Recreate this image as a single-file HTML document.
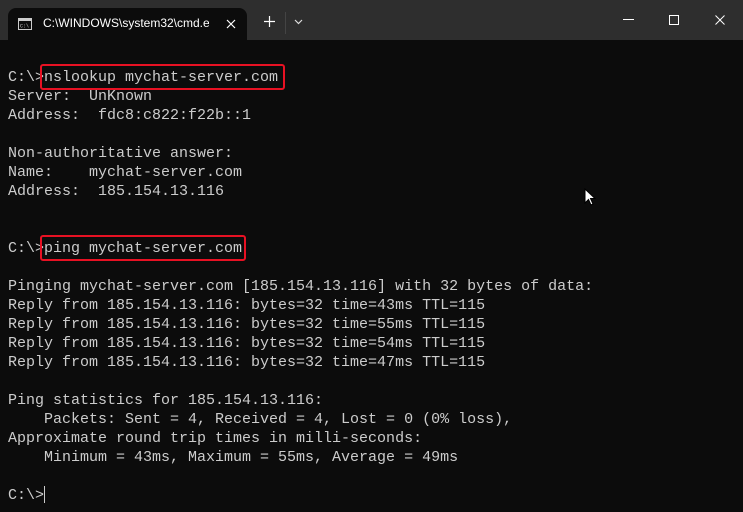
<!DOCTYPE html>
<html><head><style>
body{margin:0;width:743px;height:512px;background:#0c0c0c;overflow:hidden;position:relative;font-family:"Liberation Sans",sans-serif}
.tb{position:absolute;left:0;top:0;width:743px;height:40px;background:#2e2e2e}
.tab{position:absolute;left:8px;top:8px;width:239px;height:32px;background:#0c0c0c;border-radius:8px 8px 0 0}
.tab .t{position:absolute;left:35px;top:8px;color:#fff;font-size:12px;width:166px;overflow:hidden;white-space:nowrap}
pre{position:absolute;left:8px;top:68px;margin:0;font-family:"Liberation Mono",monospace;font-size:15px;line-height:19px;color:#cccccc}
.box{position:absolute;border:2px solid #e81123;border-radius:3px;box-sizing:border-box}
</style></head><body>
<div class="tb">
<div class="tab">
<svg style="position:absolute;left:10px;top:10px" width="14" height="12"><rect x="0.5" y="0.5" width="13" height="11" fill="none" stroke="#ccc"/><rect x="1" y="1" width="12" height="2" fill="#ccc"/><text x="2" y="9.5" font-size="5" fill="#ccc" font-family="Liberation Mono">C:\</text></svg>
<div class="t">C:\WINDOWS\system32\cmd.exe</div>
<svg style="position:absolute;left:218px;top:11px" width="10" height="10"><path d="M1 1L9 9M9 1L1 9" stroke="#fff" stroke-width="1.2"/></svg>
</div>
<svg style="position:absolute;left:264px;top:16px" width="11" height="11"><path d="M5.5 0V11M0 5.5H11" stroke="#fff" stroke-width="1.2"/></svg>
<svg style="position:absolute;left:294px;top:19px" width="9" height="6"><path d="M1 1L4.5 4.5L8 1" stroke="#ddd" fill="none" stroke-width="1.2"/></svg>
<div style="position:absolute;left:285px;top:12px;width:1px;height:22px;background:#444"></div>
<div style="position:absolute;left:623px;top:19px;width:11px;height:1px;background:#fff"></div>
<div style="position:absolute;left:669px;top:15px;width:8px;height:8px;border:1px solid #fff"></div>
<svg style="position:absolute;left:715px;top:15px" width="10" height="10"><path d="M0.5 0.5L9.5 9.5M9.5 0.5L0.5 9.5" stroke="#fff" stroke-width="1"/></svg>
</div>
<pre>C:\&gt;nslookup mychat-server.com
Server:  UnKnown
Address:  fdc8:c822:f22b::1

Non-authoritative answer:
Name:    mychat-server.com
Address:  185.154.13.116


C:\&gt;ping mychat-server.com

Pinging mychat-server.com [185.154.13.116] with 32 bytes of data:
Reply from 185.154.13.116: bytes=32 time=43ms TTL=115
Reply from 185.154.13.116: bytes=32 time=55ms TTL=115
Reply from 185.154.13.116: bytes=32 time=54ms TTL=115
Reply from 185.154.13.116: bytes=32 time=47ms TTL=115

Ping statistics for 185.154.13.116:
    Packets: Sent = 4, Received = 4, Lost = 0 (0% loss),
Approximate round trip times in milli-seconds:
    Minimum = 43ms, Maximum = 55ms, Average = 49ms

C:\&gt;</pre>
<div style="position:absolute;left:44px;top:486px;width:1px;height:17px;background:#ccc"></div>
<div class="box" style="left:40px;top:64px;width:245px;height:26px"></div>
<div class="box" style="left:40px;top:235px;width:206px;height:26px"></div>
<svg style="position:absolute;left:584px;top:188px" width="12" height="19"><path d="M1 1V15L4.5 11.5L7 17L9 16L6.5 10.5H11Z" fill="#fff" stroke="#000" stroke-width="1"/></svg>
</body></html>
